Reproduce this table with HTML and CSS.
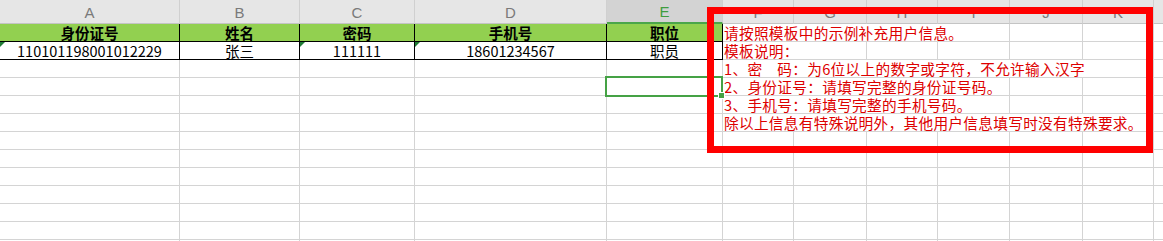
FILE: index.html
```html
<!DOCTYPE html>
<html lang="zh-CN">
<head>
<meta charset="utf-8">
<title>用户信息模板</title>
<link rel="stylesheet" href="styles.css">
</head>
<body>
<div class="wrap">
  <div class="sheet">
    <div class="ch">A</div><div class="ch">B</div><div class="ch">C</div><div class="ch">D</div><div class="ch sel">E</div><div class="ch">F</div><div class="ch">G</div><div class="ch">H</div><div class="ch">I</div><div class="ch">J</div><div class="ch">K</div><div class="ch last"></div>

    <div class="c t hd">身份证号</div><div class="c t hd">姓名</div><div class="c t hd">密码</div><div class="c t hd">手机号</div><div class="c t hd">职位</div>
    <div class="c note s4">请按照模板中的示例补充用户信息。</div><div class="c"></div><div class="c"></div><div class="c last"></div>

    <div class="c t tri">110101198001012229</div><div class="c t">张三</div><div class="c t tri">111111</div><div class="c t tri">18601234567</div><div class="c t">职员</div>
    <div class="c note s2">模板说明：</div><div class="c"></div><div class="c"></div><div class="c"></div><div class="c"></div><div class="c last"></div>

    <div class="c"></div><div class="c"></div><div class="c"></div><div class="c"></div><div class="c"></div>
    <div class="c note s6">1、密　码：为6位以上的数字或字符，不允许输入汉字</div><div class="c last"></div>

    <div class="c"></div><div class="c"></div><div class="c"></div><div class="c"></div><div class="c"></div>
    <div class="c note s4">2、身份证号：请填写完整的身份证号码。</div><div class="c"></div><div class="c"></div><div class="c last"></div>

    <div class="c"></div><div class="c"></div><div class="c"></div><div class="c"></div><div class="c"></div>
    <div class="c note s4">3、手机号：请填写完整的手机号码。</div><div class="c"></div><div class="c"></div><div class="c last"></div>

    <div class="c"></div><div class="c"></div><div class="c"></div><div class="c"></div><div class="c"></div>
    <div class="c note s6">除以上信息有特殊说明外，其他用户信息填写时没有特殊要求。</div><div class="c last"></div>

    <div class="c"></div><div class="c"></div><div class="c"></div><div class="c"></div><div class="c"></div><div class="c"></div><div class="c"></div><div class="c"></div><div class="c"></div><div class="c"></div><div class="c"></div><div class="c last"></div>
    <div class="c"></div><div class="c"></div><div class="c"></div><div class="c"></div><div class="c"></div><div class="c"></div><div class="c"></div><div class="c"></div><div class="c"></div><div class="c"></div><div class="c"></div><div class="c last"></div>
    <div class="c"></div><div class="c"></div><div class="c"></div><div class="c"></div><div class="c"></div><div class="c"></div><div class="c"></div><div class="c"></div><div class="c"></div><div class="c"></div><div class="c"></div><div class="c last"></div>
    <div class="c"></div><div class="c"></div><div class="c"></div><div class="c"></div><div class="c"></div><div class="c"></div><div class="c"></div><div class="c"></div><div class="c"></div><div class="c"></div><div class="c"></div><div class="c last"></div>
    <div class="c"></div><div class="c"></div><div class="c"></div><div class="c"></div><div class="c"></div><div class="c"></div><div class="c"></div><div class="c"></div><div class="c"></div><div class="c"></div><div class="c"></div><div class="c last"></div>
    <div class="c"></div><div class="c"></div><div class="c"></div><div class="c"></div><div class="c"></div><div class="c"></div><div class="c"></div><div class="c"></div><div class="c"></div><div class="c"></div><div class="c"></div><div class="c last"></div>
    <div class="c"></div><div class="c"></div><div class="c"></div><div class="c"></div><div class="c"></div><div class="c"></div><div class="c"></div><div class="c"></div><div class="c"></div><div class="c"></div><div class="c"></div><div class="c last"></div>
  </div>
  <div class="selection"><span class="handle"></span></div>
  <div class="textbox"></div>
</div>
</body>
</html>
```

FILE: styles.css
```css
html, body {
  margin: 0;
  padding: 0;
  background: #ffffff;
  overflow: hidden;
}

.wrap {
  position: relative;
  width: 1163px;
  height: 241px;
  overflow: hidden;
}

.sheet {
  display: grid;
  grid-template-columns: 180px 120px 115px 192px 116px 71px 73px 71px 72px 73px 71px 1fr;
  grid-template-rows: 24px;
  grid-auto-rows: 18px;
  font-family: "Noto Sans CJK SC", "Noto Sans", sans-serif;
  font-size: 14.5px;
}

.ch {
  box-sizing: border-box;
  background: #e6e6e6;
  border-right: 1px solid #d0d0d0;
  border-bottom: 1px solid #c4c4c4;
  color: #7a7a7a;
  font-family: "Liberation Sans", Arial, sans-serif;
  font-size: 15px;
  display: flex;
  align-items: center;
  justify-content: center;
  padding-top: 1px;
}

.ch.sel {
  background: #d3d3d3;
  color: #3f9d3f;
  border-bottom: 2px solid #4aa64a;
}

.ch.last {
  border-right: none;
}

.c {
  box-sizing: border-box;
  border-right: 1px solid #d4d4d4;
  border-bottom: 1px solid #d4d4d4;
  position: relative;
  line-height: 17px;
  white-space: nowrap;
}

.c.last {
  border-right: none;
}

.c.t {
  border-right-color: #000000;
  border-bottom-color: #000000;
  text-align: center;
  color: #000000;
}

.c.hd {
  background: #92d050;
  font-weight: 700;
}

.c.tri::before {
  content: "";
  position: absolute;
  left: 0;
  top: 0;
  border-top: 5px solid #1e7b34;
  border-right: 5px solid transparent;
}

.note {
  color: #dd0000;
  padding-left: 1px;
  overflow: visible;
  font-size: 14.67px;
  letter-spacing: 0.3px;
}

.s2 { grid-column: span 2; }
.s4 { grid-column: span 4; }
.s6 { grid-column: span 6; }

.selection {
  position: absolute;
  left: 605px;
  top: 76px;
  width: 118px;
  height: 21px;
  box-sizing: border-box;
  border: 2px solid #45a245;
}

.handle {
  position: absolute;
  right: -4px;
  bottom: -4px;
  width: 5px;
  height: 5px;
  background: #45a245;
  border: 1px solid #ffffff;
}

.textbox {
  position: absolute;
  left: 707px;
  top: 7px;
  width: 446px;
  height: 146px;
  box-sizing: border-box;
  border: 7px solid #ff0000;
}
```
